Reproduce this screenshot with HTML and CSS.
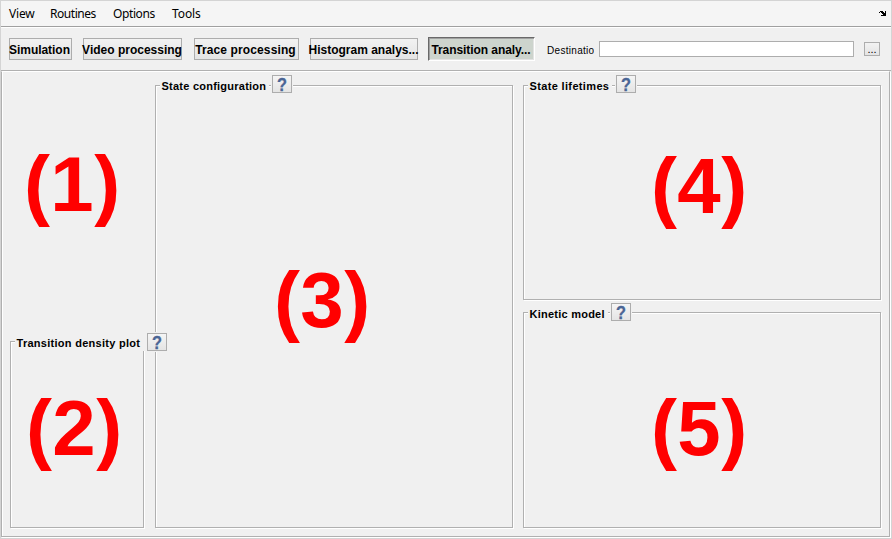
FILE: index.html
```
<!DOCTYPE html>
<html lang="en">
<head>
<meta charset="utf-8">
<title>Transition analysis</title>
<link rel="stylesheet" href="styles.css">
</head>
<body>
<div class="window">
  <nav class="menubar">
    <span class="m-view">View</span><span class="m-routines">Routines</span><span class="m-options">Options</span><span class="m-tools">Tools</span>
    <svg class="dock" width="7" height="5" viewBox="0 0 7 5" shape-rendering="crispEdges"><path d="M1 0h3v1h1v1h1V0h1v5H2V4h2V3H3V2H2V1H1v1H0V1h1z"/></svg>
  </nav>
  <header class="toolbar">
    <button class="btn b1"><span>Simulation</span></button>
    <button class="btn b2"><span>Video processing</span></button>
    <button class="btn b3"><span>Trace processing</span></button>
    <button class="btn b4"><span>Histogram analys...</span></button>
    <button class="btn b5 active"><span>Transition analy...</span></button>
    <span class="dest">Destinatio</span>
    <input class="path" type="text" aria-label="Destination">
    <button class="browse">...</button>
  </header>
  <main class="content">
    <div class="left">
      <section class="area"><span class="num">(1)</span></section>
      <section class="group density"><div class="legend"><h2>Transition density plot</h2><button class="help"><span>?</span></button></div><span class="num">(2)</span></section>
    </div>
    <section class="group config"><div class="legend"><h2>State configuration</h2><button class="help"><span>?</span></button></div><span class="num">(3)</span></section>
    <div class="right">
      <section class="group lifetimes"><div class="legend"><h2>State lifetimes</h2><button class="help"><span>?</span></button></div><span class="num">(4)</span></section>
      <section class="group kinetic"><div class="legend"><h2>Kinetic model</h2><button class="help"><span>?</span></button></div><span class="num">(5)</span></section>
    </div>
  </main>
</div>
</body>
</html>
```
FILE: styles.css
```
* { box-sizing: border-box; }
body { margin: 0; font-family: "Liberation Sans", Arial, sans-serif; color: #000; }
button, input { margin: 0; padding: 0; border-radius: 0; font-family: inherit; color: #000; }
.window { width: 892px; height: 539px; border: 1px solid #d4d4d4; background: #f0f0f0; display: flex; flex-direction: column; overflow: hidden; }

.menubar { height: 26px; flex: none; background: #f5f5f5; border-bottom: 1px solid #a0a0a0; display: flex; align-items: center; padding: 0 5px 0 8px; font: 12px/25px "Noto Sans", sans-serif; white-space: nowrap; }
.m-view { width: 41px; letter-spacing: -0.2px; }
.m-routines { width: 63px; letter-spacing: -0.45px; }
.m-options { width: 59px; letter-spacing: -0.4px; }
.m-tools { width: 40px; letter-spacing: -0.1px; }
.dock { margin-left: auto; }

.toolbar { height: 44px; flex: none; border-top: 1px solid #fff; border-bottom: 1px solid #b0b0b0; display: flex; align-items: flex-start; padding: 10px 0 0 8px; }
.btn { height: 22px; border: 1px solid #adadad; background: linear-gradient(#f2f2f2, #e4e4e4); font-size: 12px; font-weight: bold; line-height: 22px; white-space: nowrap; display: flex; justify-content: center; align-items: flex-start; flex: none; }
.b1 { width: 63px; margin-right: 11px; padding-right: 2px; letter-spacing: -0.05px; }
.b2 { width: 99px; margin-right: 12px; padding-right: 1px; }
.b3 { width: 105px; margin-right: 11px; padding-right: 2px; letter-spacing: 0.12px; }
.b4 { width: 108px; margin-right: 10px; padding-right: 1px; }
.b5 { width: 107px; height: 24px; margin-top: -1px; margin-right: 12px; padding-right: 1px; letter-spacing: -0.07px; }
.active { background: #cdd4cd; border-color: #696969 #fff #fff #696969; box-shadow: inset 1px 1px #a0a0a0, inset -1px -1px #e3e3e3; line-height: 24px; }
.dest { width: 47px; height: 9px; margin: 7px 5px 0 0; font-size: 10px; line-height: 12px; letter-spacing: 0.3px; overflow: hidden; white-space: nowrap; flex: none; }
.path { width: 255px; height: 16px; margin: 3px 10px 0 0; border: 1px solid #adadad; background: #fff; flex: none; }
.browse { width: 16px; height: 14px; margin-top: 4px; border: 1px solid #adadad; background: linear-gradient(#f2f2f2, #e4e4e4); font-size: 11px; line-height: 12px; flex: none; }

.content { width: 889px; height: 466px; flex: none; border: 1px solid #b0b0b0; border-top-color: #fff; box-shadow: inset 1px 0 #fff, 1px 1px #fff; display: grid; grid-template-columns: 145px 368px 358px; justify-content: start; padding: 13px 0 8px 8px; }
.left { display: flex; flex-direction: column; width: 134px; height: 443px; position: relative; z-index: 1; }
.area { height: 256px; position: relative; }
.group { border: 1px solid #b0b0b0; box-shadow: inset 1px 1px #fff, 1px 1px #fff; position: relative; }
.config { width: 358px; height: 443px; }
.density { width: 134px; height: 187px; }
.right { display: flex; flex-direction: column; gap: 12px; height: 443px; }
.lifetimes { height: 215px; }
.kinetic { height: 216px; }

.legend { position: absolute; left: 4px; top: -11px; display: flex; height: 20px; align-items: flex-start; }
.legend h2 { margin: 3px 0 0; padding: 0 0 0 1.5px; font-size: 11px; line-height: 16px; height: 14px; letter-spacing: 0.24px; background: #f0f0f0; box-shadow: 3px 0 #f0f0f0; white-space: nowrap; }
.help { width: 20px; height: 18px; margin-left: 6px; border: 1px solid #adadad; background: linear-gradient(#f5f5f5, #e4e4e4); box-shadow: 0 0 0 1px #f0f0f0; color: #4a6595; font-size: 19px; line-height: 17px; font-weight: bold; }
.help span { display: block; transform: scaleX(0.86); -webkit-text-stroke: 0.3px #4a6595; }
.lifetimes h2 { letter-spacing: 0.35px; }
.lifetimes .help { margin-left: 7px; }
.kinetic h2, .density h2 { margin-top: 4px; }
.kinetic .help { margin-top: 1px; }
.density h2 { letter-spacing: 0.28px; }
.density .help { margin: 2px 0 0 7px; box-shadow: 0 0 0 1px #f0f0f0, -6px 0 #f0f0f0; }

.num { position: absolute; color: #f00; font-size: 78px; line-height: 80px; font-weight: bold; letter-spacing: 0.4px; white-space: nowrap; }
.area .num { left: 14px; top: 59px; }
.density .num { left: 15px; top: 46px; }
.config .num { left: 118px; top: 174px; }
.lifetimes .num { left: 127px; top: 60px; }
.kinetic .num { left: 127px; top: 75px; }
```
